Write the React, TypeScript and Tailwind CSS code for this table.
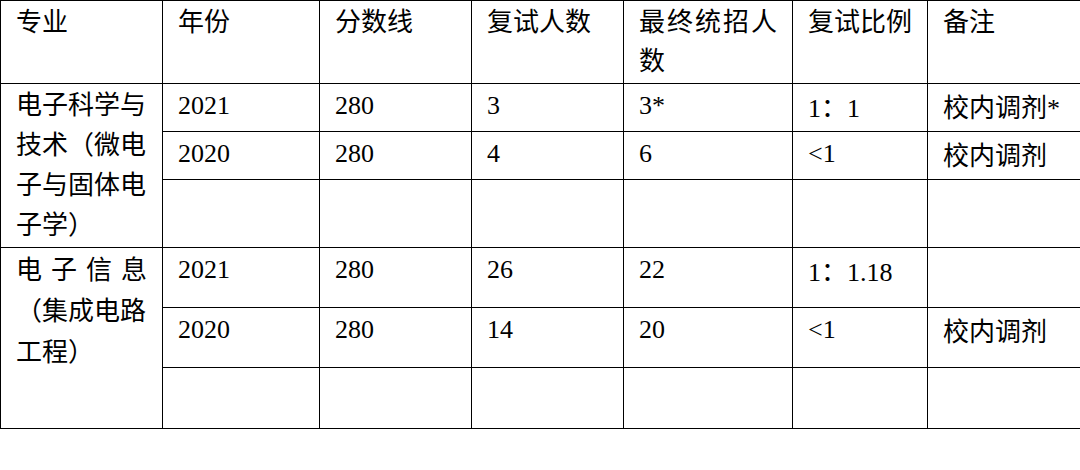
const rows = [
  {
    major: ["电子科学与", "技术（微电", "子与固体电", "子学）"],
    lead: "leading-[40px]",
    spread: false,
    years: [
      { year: "2021", line: "280", retest: "3", final: "3*", ratio: ["1", "：", "1"], note: ["校内调剂", "*"], h: "h-[48px]" },
      { year: "2020", line: "280", retest: "4", final: "6", ratio: ["<1"], note: ["校内调剂"], h: "h-[48px]" },
      { year: "", line: "", retest: "", final: "", ratio: [], note: [], h: "h-[68px]" },
    ],
  },
  {
    major: ["电子信息", "（集成电路", "工程）"],
    lead: "leading-[41px]",
    spread: true,
    years: [
      { year: "2021", line: "280", retest: "26", final: "22", ratio: ["1", "：", "1.18"], note: [], h: "h-[60px]" },
      { year: "2020", line: "280", retest: "14", final: "20", ratio: ["<1"], note: ["校内调剂"], h: "h-[60px]" },
      { year: "", line: "", retest: "", final: "", ratio: [], note: [], h: "h-[61px]" },
    ],
  },
];

const cell = "border border-black px-[15px] pt-[2px] align-top leading-[39px] text-justify";

// latin bits after CJK get their own face, else chrome keeps the CJK fallback
function Parts({ parts }: { parts: string[] }) {
  return (
    <>
      {parts.map((p, i) =>
        /^[\x00-\x7f]+$/.test(p) ? (
          <span key={i} className="font-['Liberation_Serif',serif]">
            {p}
          </span>
        ) : (
          <span key={i} className="font-['Noto_Sans_CJK_SC',sans-serif]">
            {p}
          </span>
        ),
      )}
    </>
  );
}

export default function App() {
  return (
    <div className="h-[470px] w-[1080px] bg-white font-['Liberation_Serif','Noto_Sans_CJK_SC',serif] text-[26px] text-black">
      <table className="w-[1080px] table-fixed border-collapse">
        <colgroup>
          <col className="w-[162px]" />
          <col className="w-[157px]" />
          <col className="w-[152px]" />
          <col className="w-[152px]" />
          <col className="w-[169px]" />
          <col className="w-[135px]" />
          <col className="w-[153px]" />
        </colgroup>
        <tbody>
          <tr className="h-[83px]">
            <td className={cell}>专业</td>
            <td className={cell}>年份</td>
            <td className={cell}>分数线</td>
            <td className={cell}>复试人数</td>
            <td className={cell}>最终统招人数</td>
            <td className={cell}>复试比例</td>
            <td className={cell}>备注</td>
          </tr>
          {rows.map((group) =>
            group.years.map((r, i) => (
              <tr key={group.major[0] + i} className={r.h}>
                {i === 0 && (
                  <td rowSpan={3} className={`${cell} ${group.lead}`}>
                    {group.major.map((text, j) =>
                      group.spread && j === 0 ? (
                        <div key={j} className="flex justify-between whitespace-nowrap">
                          {text.split("").map((ch) => (
                            <span key={ch}>{ch}</span>
                          ))}
                        </div>
                      ) : (
                        <div key={j} className="whitespace-nowrap">
                          {text}
                        </div>
                      ),
                    )}
                  </td>
                )}
                <td className={cell}>{r.year}</td>
                <td className={cell}>{r.line}</td>
                <td className={cell}>{r.retest}</td>
                <td className={cell}>{r.final}</td>
                <td className={cell}>
                  <Parts parts={r.ratio} />
                </td>
                <td className={cell}>
                  <Parts parts={r.note} />
                </td>
              </tr>
            )),
          )}
        </tbody>
      </table>
    </div>
  );
}
